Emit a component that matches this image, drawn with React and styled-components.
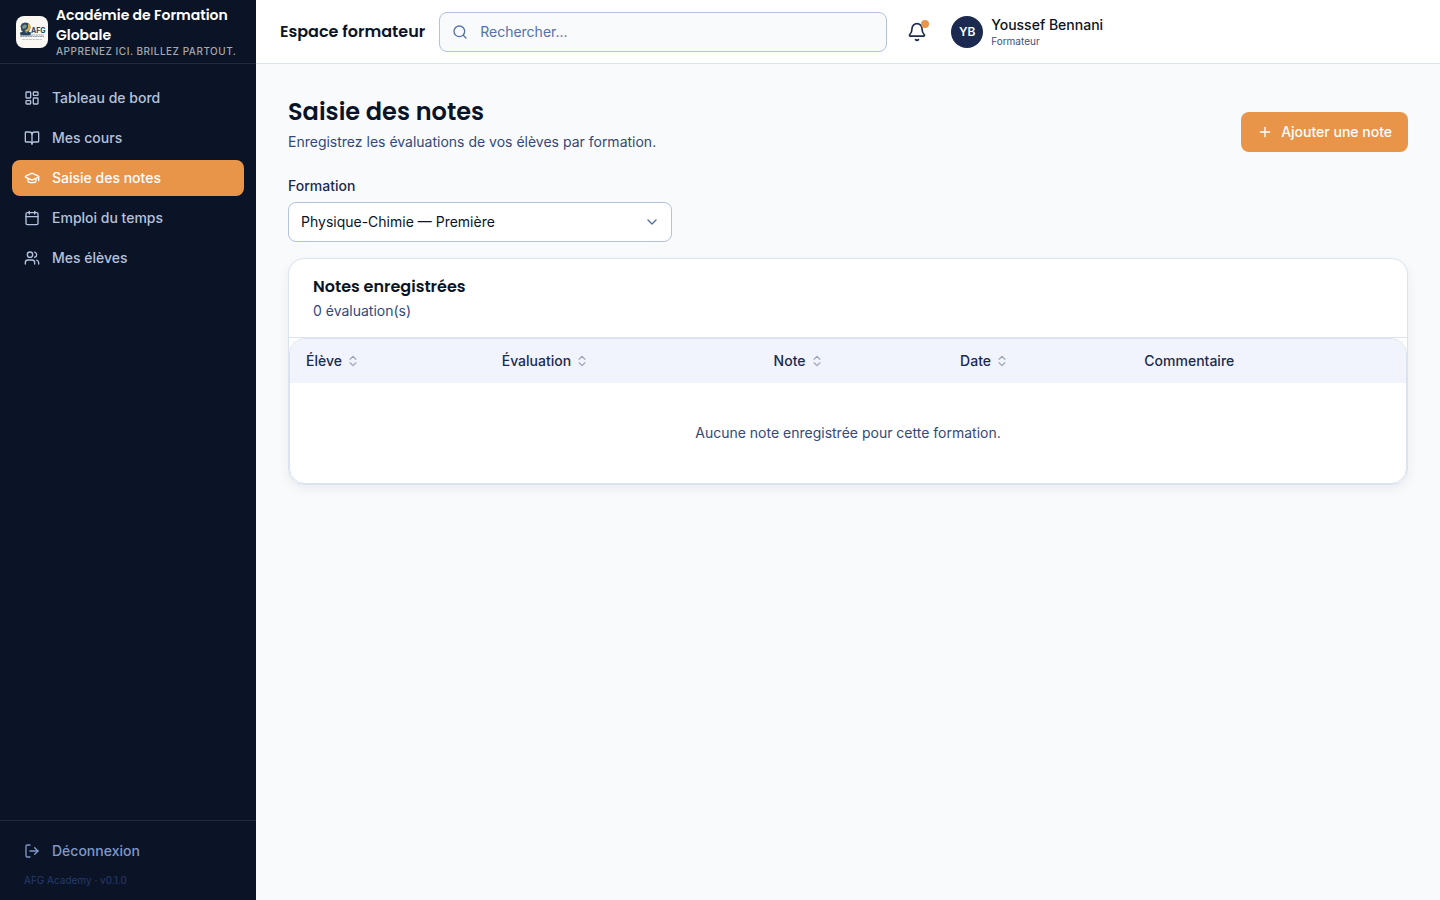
import React from "react";
import styled, { createGlobalStyle } from "styled-components";
import {
  Bell,
  BookOpen,
  Calendar,
  ChevronDown,
  ChevronsUpDown,
  GraduationCap,
  LayoutDashboard,
  LogOut,
  Plus,
  Search,
  Users,
} from "lucide-react";

const links = [
  { label: "Tableau de bord", icon: LayoutDashboard },
  { label: "Mes cours", icon: BookOpen },
  { label: "Saisie des notes", icon: GraduationCap, active: true },
  { label: "Emploi du temps", icon: Calendar },
  { label: "Mes élèves", icon: Users },
];

const columns = [
  { label: "Élève", sortable: true },
  { label: "Évaluation", sortable: true },
  { label: "Note", sortable: true },
  { label: "Date", sortable: true },
  { label: "Commentaire" },
];

function Logo() {
  return (
    <LogoBox>
      <svg width="32" height="32" viewBox="0 0 32 32" aria-hidden="true">
        <path d="M4.500 10 6 7.500 9 6.500 12 7 14 9 14.500 12 13 15.500 9 17 5.500 15Z" fill="#2c4b5e" />
        <path d="M6 10.500 8.500 8.500 11 9.500 10 12 7 13Z" fill="#7f9790" />
        <path d="M12 7.500 14.500 9.500 14 13.500 11 16 8.500 15 12 12Z" fill="#d5ab53" />
        <path d="M4 16.500 8 15.500 10 17 12 15.500 15 16.500 14.500 19.500 4.500 19.500Z" fill="#25445e" />
        <text x="15" y="17" fontSize="7" fontWeight="700" fill="#24475f">
          AFG
        </text>
        <path d="M15 19H28M4 20.500H28" stroke="#8fa0ac" strokeDasharray="2 0.500" />
        <path d="M6 23.500H26" stroke="#c3c8cc" strokeDasharray="3 0.500" />
      </svg>
    </LogoBox>
  );
}

function Sidebar() {
  return (
    <SidebarStyled>
      <Brand>
        <Logo />
        <div>
          <BrandName>Académie de Formation Globale</BrandName>
          <Tagline>Apprenez ici. Brillez partout.</Tagline>
        </div>
      </Brand>
      <Nav>
        {links.map(({ label, icon: Icon, active }) => (
          <NavLink href="#" key={label} $active={active}>
            <Icon size={16} />
            {label}
          </NavLink>
        ))}
      </Nav>
      <SidebarFooter>
        <LogoutButton type="button">
          <LogOut size={16} />
          Déconnexion
        </LogoutButton>
        <Version>AFG Academy · v0.1.0</Version>
      </SidebarFooter>
    </SidebarStyled>
  );
}

function Topbar() {
  return (
    <TopbarStyled>
      <SpaceTitle>Espace formateur</SpaceTitle>
      <SearchBox>
        <Search size={16} />
        <input type="search" placeholder="Rechercher..." aria-label="Rechercher" />
      </SearchBox>
      <BellButton type="button" aria-label="Notifications">
        <Bell size={20} />
        <Dot />
      </BellButton>
      <UserButton type="button">
        <Avatar>YB</Avatar>
        <span>
          <UserName>Youssef Bennani</UserName>
          <UserRole>Formateur</UserRole>
        </span>
      </UserButton>
    </TopbarStyled>
  );
}

function GradesTable() {
  return (
    <TableWrapper>
      <Table>
        <thead>
          <tr>
            {columns.map(({ label, sortable }) => (
              <th key={label} scope="col">
                {sortable ? (
                  <SortButton type="button">
                    {label}
                    <ChevronsUpDown size={14} />
                  </SortButton>
                ) : (
                  label
                )}
              </th>
            ))}
          </tr>
        </thead>
        <tbody>
          <tr>
            <td colSpan={columns.length}>
              Aucune note enregistrée pour cette formation.
            </td>
          </tr>
        </tbody>
      </Table>
    </TableWrapper>
  );
}

function App() {
  return (
    <>
      <GlobalStyle />
      <Layout>
        <Sidebar />
        <Content>
          <Topbar />
          <Main>
            <PageHeader>
              <div>
                <PageTitle>Saisie des notes</PageTitle>
                <PageText>
                  Enregistrez les évaluations de vos élèves par formation.
                </PageText>
              </div>
              <AddButton type="button">
                <Plus size={16} />
                Ajouter une note
              </AddButton>
            </PageHeader>
            <Field>
              <label htmlFor="formation">Formation</label>
              <SelectBox>
                <select id="formation" defaultValue="pc">
                  <option value="pc">Physique-Chimie — Première</option>
                </select>
                <ChevronDown size={16} />
              </SelectBox>
            </Field>
            <Card>
              <CardHeader>
                <CardTitle>Notes enregistrées</CardTitle>
                <PageText>0 évaluation(s)</PageText>
              </CardHeader>
              <GradesTable />
            </Card>
          </Main>
        </Content>
      </Layout>
    </>
  );
}

const headingFont = `Poppins, Inter, sans-serif`;

const GlobalStyle = createGlobalStyle`
  * {
    box-sizing: border-box;
    margin: 0;
    padding: 0;
  }
  body {
    background: #f8fafc;
    color: #0b1426;
    font-family: Inter, "Liberation Sans", sans-serif;
    font-size: 14px;
    line-height: 20px;
  }
  button, input, select {
    font: inherit;
    color: inherit;
    border: none;
    background: none;
  }
  button {
    cursor: pointer;
  }
  a {
    text-decoration: none;
  }
  svg {
    flex-shrink: 0;
  }
`;

const Layout = styled.div`
  display: flex;
  min-height: 100vh;
`;

const SidebarStyled = styled.aside`
  display: flex;
  flex-direction: column;
  flex: 0 0 256px;
  background: #0b1426;
`;

const Brand = styled.div`
  display: flex;
  align-items: center;
  gap: 8px;
  height: 64px;
  padding: 0 16px;
  border-bottom: 1px solid #222b3b;
`;

const LogoBox = styled.span`
  display: flex;
  flex-shrink: 0;
  overflow: hidden;
  border-radius: 8px;
  background: #fbf8f4;
`;

const BrandName = styled.p`
  color: #fff;
  font-family: ${headingFont};
  font-weight: 600;
`;

const Tagline = styled.p`
  color: #a3a7ae;
  font-size: 10px;
  font-weight: 500;
  line-height: 13px;
  letter-spacing: 0.05em;
  text-transform: uppercase;
  white-space: nowrap;
`;

const Nav = styled.nav`
  display: flex;
  flex: 1;
  flex-direction: column;
  gap: 4px;
  padding: 16px 12px;
`;

const NavLink = styled.a`
  display: flex;
  align-items: center;
  gap: 12px;
  padding: 8px 12px;
  border-radius: 8px;
  color: ${({ $active }) => ($active ? "#fff" : "#b4c2dd")};
  background: ${({ $active }) => ($active ? "#e8954a" : "transparent")};
  font-weight: 500;
`;

const SidebarFooter = styled.div`
  padding: 12px;
  border-top: 1px solid #222b3b;
`;

const LogoutButton = styled.button`
  display: flex;
  align-items: center;
  gap: 12px;
  width: 100%;
  padding: 8px 12px;
  color: #8098c8;
  font-weight: 500;
`;

const Version = styled.p`
  padding: 4px 12px 0;
  color: #263a6b;
  font-size: 10px;
  line-height: 15px;
`;

const Content = styled.div`
  flex: 1;
  min-width: 0;
`;

const TopbarStyled = styled.header`
  display: flex;
  align-items: center;
  gap: 12px;
  height: 64px;
  padding: 0 24px;
  border-bottom: 1px solid #dbe3f0;
  background: #fff;
`;

const SpaceTitle = styled.p`
  margin-right: 2px;
  font-family: ${headingFont};
  font-size: 16px;
  font-weight: 600;
  line-height: 24px;
  white-space: nowrap;
`;

const SearchBox = styled.div`
  display: flex;
  align-items: center;
  gap: 12px;
  flex: 0 1 448px;
  height: 40px;
  padding: 0 12px;
  border: 1px solid #b4c2dd;
  border-radius: 8px;
  background: #f8fafc;
  color: #5570a8;

  input {
    flex: 1;
    min-width: 0;
    outline: none;
  }
  input::placeholder {
    color: #5570a8;
    opacity: 1;
  }
`;

const BellButton = styled.button`
  position: relative;
  display: flex;
  padding: 8px;
  color: #1b2a4e;
`;

const Dot = styled.span`
  position: absolute;
  top: 6px;
  right: 6px;
  width: 8px;
  height: 8px;
  border-radius: 50%;
  background: #e8954a;
`;

const UserButton = styled.button`
  display: flex;
  align-items: center;
  gap: 8px;
  padding: 0 4px;
  text-align: left;
`;

const Avatar = styled.span`
  display: flex;
  align-items: center;
  justify-content: center;
  width: 32px;
  height: 32px;
  border-radius: 50%;
  background: #1b2a4e;
  color: #fff;
  font-size: 12px;
  font-weight: 600;
`;

const UserName = styled.span`
  display: block;
  font-weight: 500;
`;

const UserRole = styled.span`
  display: block;
  color: #3b5080;
  font-size: 10px;
  line-height: 13px;
`;

const Main = styled.main`
  padding: 32px;
`;

const PageHeader = styled.div`
  display: flex;
  align-items: flex-end;
  justify-content: space-between;
  gap: 16px;
`;

const PageTitle = styled.h1`
  margin-bottom: 4px;
  font-family: ${headingFont};
  font-size: 24px;
  font-weight: 600;
  line-height: 32px;
`;

const PageText = styled.p`
  color: #34487a;
`;

const AddButton = styled.button`
  display: flex;
  align-items: center;
  gap: 8px;
  height: 40px;
  padding: 0 16px;
  border-radius: 8px;
  background: #e8954a;
  color: #fff;
  font-weight: 500;
`;

const Field = styled.div`
  max-width: 384px;
  margin: 24px 0 16px;

  label {
    display: block;
    margin-bottom: 6px;
    color: #1b2a4e;
    font-weight: 500;
  }
`;

const SelectBox = styled.div`
  display: grid;
  align-items: center;

  select,
  svg {
    grid-area: 1 / 1;
  }
  select {
    appearance: none;
    width: 100%;
    height: 40px;
    padding: 0 40px 0 12px;
    border: 1px solid #b4c2dd;
    border-radius: 8px;
    background: #fff;
  }
  svg {
    justify-self: end;
    margin-right: 12px;
    color: #5570a8;
    pointer-events: none;
  }
`;

const Card = styled.section`
  border: 1px solid #dbe3f0;
  border-radius: 16px;
  background: #fff;
  box-shadow: 0 4px 12px rgba(11, 20, 38, 0.06);
`;

const CardHeader = styled.div`
  display: flex;
  flex-direction: column;
  gap: 2px;
  padding: 16px 24px;
  border-bottom: 1px solid #dbe3f0;
`;

const CardTitle = styled.h2`
  font-family: ${headingFont};
  font-size: 16px;
  font-weight: 600;
  line-height: 24px;
`;

const TableWrapper = styled.div`
  overflow: hidden;
  border: 1px solid #dbe3f0;
  border-radius: 16px;
`;

const Table = styled.table`
  width: 100%;
  border-collapse: collapse;

  th {
    height: 44px;
    padding: 0 16px;
    background: #f1f4fc;
    color: #1b2a4e;
    font-weight: 500;
    text-align: left;
  }
  td {
    padding: 40px 16px;
    color: #34487a;
    text-align: center;
  }
`;

const SortButton = styled.button`
  display: flex;
  align-items: center;
  gap: 4px;

  svg {
    opacity: 0.4;
  }
`;

export default App;
